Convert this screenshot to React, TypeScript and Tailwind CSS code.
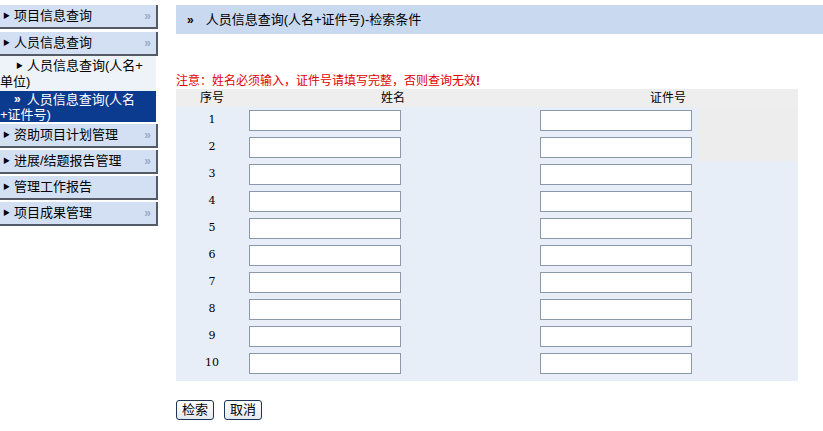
export default function App() {
  const font = { fontFamily: '"Liberation Sans", "Noto Sans CJK SC", sans-serif' };
  const menu = [
    { label: "资助项目计划管理", more: true },
    { label: "进展/结题报告管理", more: true },
    { label: "管理工作报告", more: false },
    { label: "项目成果管理", more: true },
  ];
  const rows = [1, 2, 3, 4, 5, 6, 7, 8, 9, 10];

  const Item = ({ label, more }: { label: string; more: boolean }) => (
    <div className="h-[24px] flex items-center bg-[#d3e0f3] border-r-2 border-b-2 border-[#555b66] pl-[3px] pr-[5px] text-[13px] text-black">
      <span className="text-[7px] mr-[4px]">▶</span>
      <span className="flex-1 whitespace-nowrap">{label}</span>
      {more && <span className="text-[12px] font-bold text-[#97aacb]">»</span>}
    </div>
  );

  return (
    <div className="w-[823px] h-[431px] bg-white flex overflow-hidden" style={font}>
      {/* left menu */}
      <div className="w-[158px] pt-[5px] flex flex-col shrink-0">
        <Item label="项目信息查询" more />
        <div className="h-[3px]" />
        <Item label="人员信息查询" more />
        <div className="bg-[#eef2f9] text-[13px] leading-[16px] pt-[2px] h-[35px] mr-[2px]">
          <div className="flex items-center h-[16px] pl-[16px]">
            <span className="text-[7px] mr-[4px]">▶</span>人员信息查询(人名+
          </div>
          <div className="h-[16px]">单位)</div>
        </div>
        <div className="bg-[#0b3b8e] text-white text-[13px] leading-[15px] h-[31px] pt-[1px] mr-[2px]">
          <div className="flex items-center h-[15px] pl-[14px]">
            <span className="text-[12px] font-bold mr-[6px]">»</span>人员信息查询(人名
          </div>
          <div className="h-[15px]">+证件号)</div>
        </div>
        <div className="h-[2px]" />
        <div className="flex flex-col gap-[2px]">
          {menu.map((m) => (
            <Item key={m.label} label={m.label} more={m.more} />
          ))}
        </div>
      </div>

      {/* main */}
      <div className="flex-1 pl-[18px] pt-[5px]">
        <div className="h-[29px] bg-[#c9d9ef] flex items-center pl-[11px] text-[13px] text-black">
          <span className="text-[12px] font-bold mr-[12px]">»</span>
          人员信息查询(人名+证件号)-检索条件
        </div>

        <div className="mt-[40px] text-[12px] leading-[14px] text-[#e00000] whitespace-nowrap">
          注意：姓名必须输入，证件号请填写完整，否则查询无效<b>!</b>
        </div>

        <table className="mt-[1px] w-[622px] border-collapse text-[12px] text-black">
          <thead>
            <tr className="h-[17px] bg-[#eeeeee]">
              <th className="w-[72px] font-normal text-center">序号</th>
              <th className="w-[290px] font-normal text-center">姓名</th>
              <th className="font-normal text-center">证件号</th>
            </tr>
          </thead>
          <tbody className="bg-[#e8eef7]">
            {rows.map((n) => (
              <tr key={n} className="h-[27px]">
                <td className="text-center text-[11px]" style={{ fontFamily: '"DejaVu Serif", serif' }}>{n}</td>
                <td className="pl-[1px]">
                  <input className="block w-[152px] h-[21px] bg-white border border-[#8b98ab] outline-none" />
                </td>
                <td
                  className={
                    n <= 2
                      ? "pl-[2px] bg-[linear-gradient(to_right,#e8eef7_160px,#ededed_160px)]"
                      : "pl-[2px]"
                  }
                >
                  <input className="block w-[152px] h-[21px] bg-white border border-[#8b98ab] outline-none" />
                </td>
              </tr>
            ))}
            <tr className="h-[4px]">
              <td colSpan={3} />
            </tr>
          </tbody>
        </table>

        <div className="mt-[19px] flex gap-[10px]">
          <button className="h-[20px] w-[38px] text-[13px] leading-[16px] border border-[#1d3557] rounded-[3px] bg-[linear-gradient(#ffffff,#e3e8ef)]">
            检索
          </button>
          <button className="h-[20px] w-[38px] text-[13px] leading-[16px] border border-[#1d3557] rounded-[3px] bg-[linear-gradient(#ffffff,#e3e8ef)]">
            取消
          </button>
        </div>
      </div>
    </div>
  );
}
